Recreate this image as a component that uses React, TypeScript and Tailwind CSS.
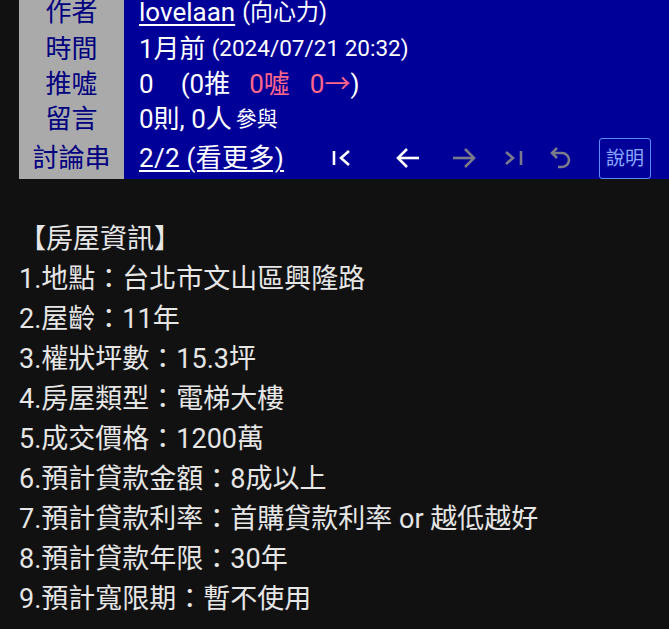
const font = "font-['Roboto','Noto_Sans_CJK_TC',sans-serif]";

const rows: { label: string; h: string }[] = [
  { label: "作者", h: "h-[36px]" },
  { label: "時間", h: "h-[37px]" },
  { label: "推噓", h: "h-[34px]" },
  { label: "留言", h: "h-[36px]" },
  { label: "討論串", h: "h-[42px]" },
];

const lines = [
  "【房屋資訊】",
  "1.地點：台北市文山區興隆路",
  "2.屋齡：11年",
  "3.權狀坪數：15.3坪",
  "4.房屋類型：電梯大樓",
  "5.成交價格：1200萬",
  "6.預計貸款金額：8成以上",
  "7.預計貸款利率：首購貸款利率 or 越低越好",
  "8.預計貸款年限：30年",
  "9.預計寬限期：暫不使用",
];

function FirstIcon() {
  return (
    <svg width="22" height="22" viewBox="0 0 22 22" fill="none" stroke="white" strokeWidth="2.6">
      <path d="M3 4v14" />
      <path d="M18 4l-8 7 8 7" />
    </svg>
  );
}

function LeftIcon({ color }: { color: string }) {
  return (
    <svg width="26" height="24" viewBox="0 0 26 24" fill="none" stroke={color} strokeWidth="2.6">
      <path d="M24 12H3" />
      <path d="M12 3l-9 9 9 9" />
    </svg>
  );
}

function RightIcon({ color }: { color: string }) {
  return (
    <svg width="26" height="24" viewBox="0 0 26 24" fill="none" stroke={color} strokeWidth="2.6">
      <path d="M2 12h21" />
      <path d="M14 3l9 9-9 9" />
    </svg>
  );
}

function LastIcon() {
  return (
    <svg width="22" height="22" viewBox="0 0 22 22" fill="none" stroke="#7a7a8a" strokeWidth="2.6">
      <path d="M3 5l7 6-7 6" />
      <path d="M18 4v14" />
    </svg>
  );
}

function UndoIcon() {
  return (
    <svg width="26" height="26" viewBox="0 0 26 26" fill="none" stroke="#7a7a8a" strokeWidth="2.6">
      <path d="M8 3L3 8l5 5" />
      <path d="M3 8h10a7 7 0 0 1 0 14H9" />
    </svg>
  );
}

export default function App() {
  return (
    <div className={`min-h-[629px] w-[669px] overflow-hidden bg-[#111111] ${font}`}>
      <div className="ml-[19px] mt-[-6px] flex">
        <div className="flex w-[105px] flex-col bg-[#aaaaaa] text-[26px] text-[#000080]">
          {rows.map((r) => (
            <div key={r.label} className={`flex ${r.h} items-center justify-center leading-none`}>
              {r.label}
            </div>
          ))}
        </div>
        <div className="flex flex-1 flex-col bg-[#000099] pl-[15px] text-[26px] text-white">
          <div className="flex h-[36px] items-center leading-none">
            <span className="underline decoration-2 underline-offset-[3px]">lovelaan</span>
            <span className="ml-[7px] text-[23px]">(向心力)</span>
          </div>
          <div className="flex h-[37px] items-center leading-none">
            <span>1月前</span>
            <span className="ml-[6px] text-[22.5px]">(2024/07/21 20:32)</span>
          </div>
          <div className="flex h-[34px] items-center whitespace-pre leading-none">
            <span>0</span>
            <span className="ml-[27px]">(0推</span>
            <span className="ml-[19px] text-[#ff6688]">0噓</span>
            <span className="ml-[20px] text-[#ff6688]">0→</span>
            <span>)</span>
          </div>
          <div className="flex h-[36px] items-center leading-none">
            <span>0則, 0人</span>
            <span className="ml-[4px] text-[21px]">參與</span>
          </div>
          <div className="flex h-[42px] items-center leading-none">
            <span className="tracking-[0.3px] underline decoration-2 underline-offset-[3px]">2/2 (看更多)</span>
            <div className="ml-[47px] flex items-center">
              <FirstIcon />
              <div className="ml-[42px]"><LeftIcon color="white" /></div>
              <div className="ml-[30px]"><RightIcon color="#7a7a8a" /></div>
              <div className="ml-[26px]"><LastIcon /></div>
              <div className="ml-[24px]"><UndoIcon /></div>
              <div className="ml-[24px] flex h-[41px] w-[52px] items-center justify-center rounded-[3px] border border-[#5b8cff] text-[19px] text-[#8aa8ff]">
                說明
              </div>
            </div>
          </div>
        </div>
      </div>
      <div className="mt-[40px] pl-[19px] text-[27px] leading-[40px] text-[#e6e6e6]">
        {lines.map((l) => (
          <div key={l}>{l}</div>
        ))}
      </div>
    </div>
  );
}
